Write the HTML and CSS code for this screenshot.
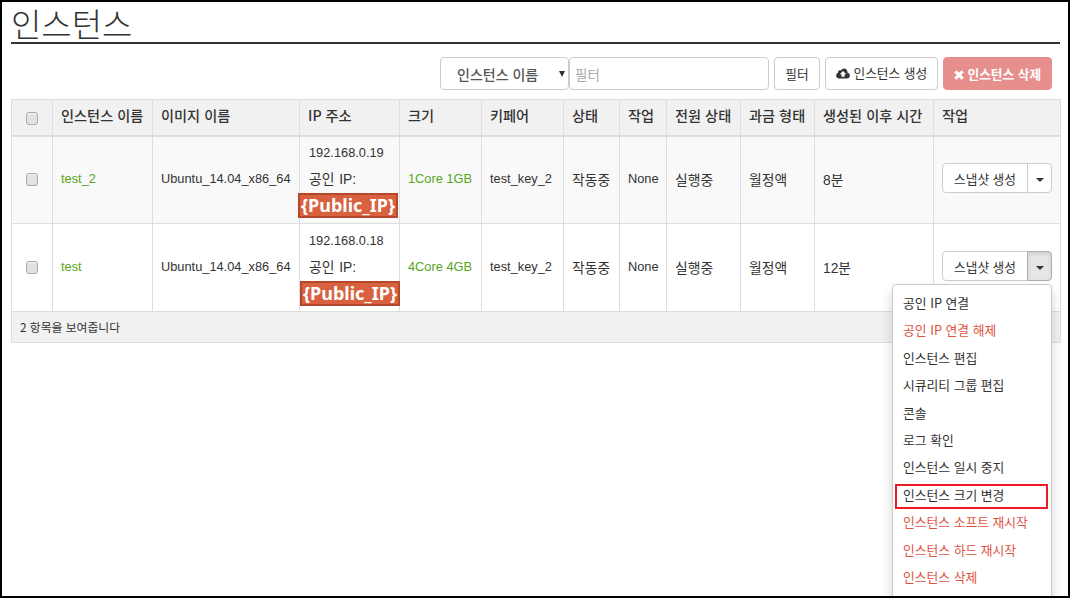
FILE: index.html
```html
<!DOCTYPE html>
<html lang="ko">
<head>
<meta charset="utf-8">
<title>인스턴스</title>
<link rel="stylesheet" href="styles.css">
</head>
<body>
<div class="frame">
  <h1 class="title"><span class="title-text">인스턴스</span></h1>
  <div class="toolbar">
    <div class="select-wrap">
      <select class="select"><option>인스턴스 이름</option></select>
    </div>
    <input class="filter-input" type="text" placeholder="필터">
    <button class="btn btn-filter" type="button">필터</button>
    <button class="btn btn-create" type="button">
      <svg class="icon" viewBox="0 0 20 16" width="14" height="11"><path fill="#333" d="M16.3 6.6C16.4 6.3 16.4 6 16.4 5.7 16.4 3 14.3.9 11.6.9 9.7.9 8 2 7.2 3.7 6.7 3.3 6.1 3.1 5.4 3.1 3.9 3.1 2.7 4.3 2.7 5.8 2.7 6.2 2.8 6.6 2.9 6.9 1.2 7.5 0 9.1 0 11 0 13.4 2 15.4 4.4 15.4H15.6C18 15.4 20 13.4 20 11 20 8.9 18.4 7.1 16.3 6.6ZM12.3 9.1V12.7H7.8V9.1H5.3L10 4.4 14.8 9.1Z"/></svg>
      인스턴스 생성
    </button>
    <button class="btn btn-delete" type="button">
      <svg class="icon" viewBox="0 0 12 12" width="10" height="10"><path fill="#fff" d="M2.9 .3 6 3.4 9.1 .3 11.7 2.9 8.6 6 11.7 9.1 9.1 11.7 6 8.6 2.9 11.7 .3 9.1 3.4 6 .3 2.9Z"/></svg>
      인스턴스 삭제
    </button>
  </div>
  <table class="table">
    <colgroup>
      <col class="c1"><col class="c2"><col class="c3"><col class="c4"><col class="c5"><col class="c6"><col class="c7"><col class="c8"><col class="c9"><col class="c10"><col class="c11"><col class="c12">
    </colgroup>
    <thead>
      <tr>
        <th class="check"><input class="cb" type="checkbox"></th>
        <th>인스턴스 이름</th><th>이미지 이름</th><th>IP 주소</th><th>크기</th><th>키페어</th><th>상태</th><th>작업</th><th>전원 상태</th><th>과금 형태</th><th>생성된 이후 시간</th><th>작업</th>
      </tr>
    </thead>
    <tbody>
      <tr class="odd">
        <td class="check"><input class="cb" type="checkbox"></td>
        <td class="green">test_2</td>
        <td>Ubuntu_14.04_x86_64</td>
        <td class="ip">
          <div class="ip-line">192.168.0.19</div>
          <div class="ip-line ko">공인 IP:</div>
          <div class="ip-line"><span class="badge badge-a">{Public_IP}</span></div>
        </td>
        <td class="green">1Core 1GB</td>
        <td>test_key_2</td><td class="ko">작동중</td><td>None</td><td class="ko">실행중</td><td class="ko">월정액</td><td class="ko">8분</td>
        <td class="actions"><div class="split"><button class="split-main" type="button">스냅샷 생성</button><button class="split-caret" type="button"><span class="caret"></span></button></div></td>
      </tr>
      <tr>
        <td class="check"><input class="cb" type="checkbox"></td>
        <td class="green">test</td>
        <td>Ubuntu_14.04_x86_64</td>
        <td class="ip">
          <div class="ip-line">192.168.0.18</div>
          <div class="ip-line ko">공인 IP:</div>
          <div class="ip-line"><span class="badge badge-b">{Public_IP}</span></div>
        </td>
        <td class="green">4Core 4GB</td>
        <td>test_key_2</td><td class="ko">작동중</td><td>None</td><td class="ko">실행중</td><td class="ko">월정액</td><td class="ko">12분</td>
        <td class="actions"><div class="split"><button class="split-main" type="button">스냅샷 생성</button><button class="split-caret open" type="button"><span class="caret"></span></button></div></td>
      </tr>
    </tbody>
    <tfoot>
      <tr><td class="foot" colspan="12">2 항목을 보여줍니다</td></tr>
    </tfoot>
  </table>
  <ul class="menu">
    <li class="item">공인 IP 연결</li>
    <li class="item danger">공인 IP 연결 해제</li>
    <li class="item">인스턴스 편집</li>
    <li class="item">시큐리티 그룹 편집</li>
    <li class="item">콘솔</li>
    <li class="item">로그 확인</li>
    <li class="item">인스턴스 일시 중지</li>
    <li class="item marked">인스턴스 크기 변경</li>
    <li class="item danger">인스턴스 소프트 재시작</li>
    <li class="item danger">인스턴스 하드 재시작</li>
    <li class="item danger">인스턴스 삭제</li>
  </ul>
</div>
</body>
</html>
```
FILE: styles.css
```css
* { box-sizing: border-box; }
html, body { margin: 0; padding: 0; }
body {
  width: 1070px;
  height: 598px;
  background: #fff;
  color: #333;
  font-family: "Liberation Sans", "Noto Sans CJK KR", sans-serif;
  font-size: 12px;
}
.frame {
  position: relative;
  width: 1070px;
  height: 598px;
  border: 2px solid #000;
  padding: 0 7px 0 9px;
  overflow: hidden;
}
.title {
  margin: 0 1px 0 0;
  height: 42px;
  border-bottom: 2px solid #333;
  font-family: "Noto Sans CJK KR", sans-serif;
  font-size: 33px;
  font-weight: 300;
  line-height: 42px;
  color: #333;
}
.toolbar {
  display: flex;
  justify-content: flex-end;
  align-items: flex-start;
  margin-top: 13px;
  padding-right: 9px;
  height: 33px;
}
.select-wrap { position: relative; width: 129px; height: 33px; }
.select-wrap::after {
  content: "";
  position: absolute;
  right: 4px;
  top: 14px;
  border-left: 3.5px solid transparent;
  border-right: 3.5px solid transparent;
  border-top: 6px solid #333;
}
.select {
  width: 100%;
  height: 33px;
  appearance: none;
  background: #fff;
  border: 1px solid #ccc;
  border-radius: 4px;
  padding: 0 0 0 16px;
  color: #555;
  font: 500 14px "Noto Sans CJK KR", sans-serif;
}
.filter-input {
  width: 200px;
  height: 33px;
  border: 1px solid #ccc;
  border-radius: 4px;
  padding: 0 5px;
  background: #fff;
  font: 13.5px "Noto Sans CJK KR", sans-serif;
}
.filter-input::placeholder { color: #aaa; opacity: 1; }
.btn {
  height: 33px;
  margin-left: 5px;
  border: 1px solid #ccc;
  border-radius: 4px;
  background: #fff;
  color: #333;
  padding: 0;
  font: 12.7px "Noto Sans CJK KR", sans-serif;
  white-space: nowrap;
}
.btn-filter { width: 46px; }
.btn-create { width: 113px; padding-bottom: 3px; }
.btn-delete {
  width: 109px;
  background: #e68f8d;
  border-color: #e68f8d;
  color: #fff;
  font-weight: 700;
}
.icon { vertical-align: -1px; }
.table {
  width: 1049px;
  margin-top: 9px;
  border-collapse: collapse;
  table-layout: fixed;
  border: 1px solid #ddd;
}
.c1 { width: 41px; }
.c2 { width: 100px; }
.c3 { width: 147px; }
.c4 { width: 100px; }
.c5 { width: 82px; }
.c6 { width: 82px; }
.c7 { width: 56px; }
.c8 { width: 47px; }
.c9 { width: 74px; }
.c10 { width: 74px; }
.c11 { width: 119px; }
.c12 { width: 127px; }
th, td {
  border: 1px solid #ddd;
  padding: 0 8px;
  text-align: left;
  white-space: nowrap;
  vertical-align: middle;
}
th {
  height: 36px;
  padding-bottom: 4px;
  background: #f1f1f1;
  border-bottom: 2px solid #ddd;
  font-family: "Noto Sans CJK KR", sans-serif;
  font-weight: 500;
  font-size: 14.2px;
  color: #333;
}
th.check { padding: 0 0 2px; }
tbody tr { height: 88px; }
tbody td { font-size: 12.8px; padding-bottom: 2px; }
tbody td.check { padding: 0 0 3px; }
tbody td.ko, .ip-line.ko { font-size: 13.8px; word-spacing: 1px; }
.odd td { background: #f9f9f9; }
.check { padding: 0; text-align: center; }
.cb {
  appearance: none;
  display: inline-block;
  width: 12px;
  height: 13px;
  margin: 0;
  border: 1px solid #aaa;
  border-radius: 3px;
  background: #e2e2e2;
  box-shadow: inset 0 1px 1px #f5f5f5;
  vertical-align: middle;
}
.green { color: #55a61d; }
tbody td.ip { padding: 0 8px 0 9px; }
.ip-line { height: 27px; line-height: 27px; }
.badge {
  position: relative;
  display: inline-block;
  height: 25px;
  background: #d8613f;
  border: 2px solid #b5472a;
  color: #fff;
  font-family: "Noto Sans", sans-serif;
  font-size: 18px;
  font-weight: 700;
  line-height: 20px;
  text-align: center;
  white-space: nowrap;
}
.badge-a { margin-left: -11px; width: 100px; }
.badge-b { margin-left: -9px; width: 100px; }
tbody td.actions { padding: 0 0 3px 8px; }
.split { display: flex; width: 110px; height: 30px; }
.split-main, .split-caret {
  height: 30px;
  border: 1px solid #ccc;
  background: #fff;
  color: #333;
  padding: 0;
  font: 12.7px "Noto Sans CJK KR", sans-serif;
}
.split-main { width: 86px; border-radius: 4px 0 0 4px; }
.split-caret { width: 25px; margin-left: -1px; border-radius: 0 4px 4px 0; }
.split-caret.open { background: #e6e6e6; border-color: #adadad; box-shadow: inset 0 2px 4px rgba(0,0,0,.1); }
.caret {
  display: inline-block;
  border-left: 4px solid transparent;
  border-right: 4px solid transparent;
  border-top: 4px solid #333;
  vertical-align: middle;
}
.foot {
  height: 31px;
  padding-bottom: 2px;
  background: #f1f1f1;
  font-family: "Noto Sans CJK KR", sans-serif;
  font-size: 11.8px;
  color: #333;
}
.menu {
  position: absolute;
  left: 890px;
  top: 282px;
  width: 160px;
  margin: 0;
  padding: 4px 0 20px;
  list-style: none;
  background: #fff;
  border: 1px solid #ccc;
  border-radius: 4px;
  box-shadow: 0 6px 12px rgba(0,0,0,.175);
  font-family: "Noto Sans CJK KR", sans-serif;
  font-size: 12.8px;
}
.item {
  height: 27.4px;
  line-height: 27px;
  padding-left: 10px;
  color: #333;
  white-space: nowrap;
}
.danger { color: #e0533f; }
.marked { position: relative; }
.marked::after {
  content: "";
  position: absolute;
  left: 2px;
  right: 3px;
  top: 3px;
  bottom: -1px;
  border: 2px solid #ed1c24;
}
```
